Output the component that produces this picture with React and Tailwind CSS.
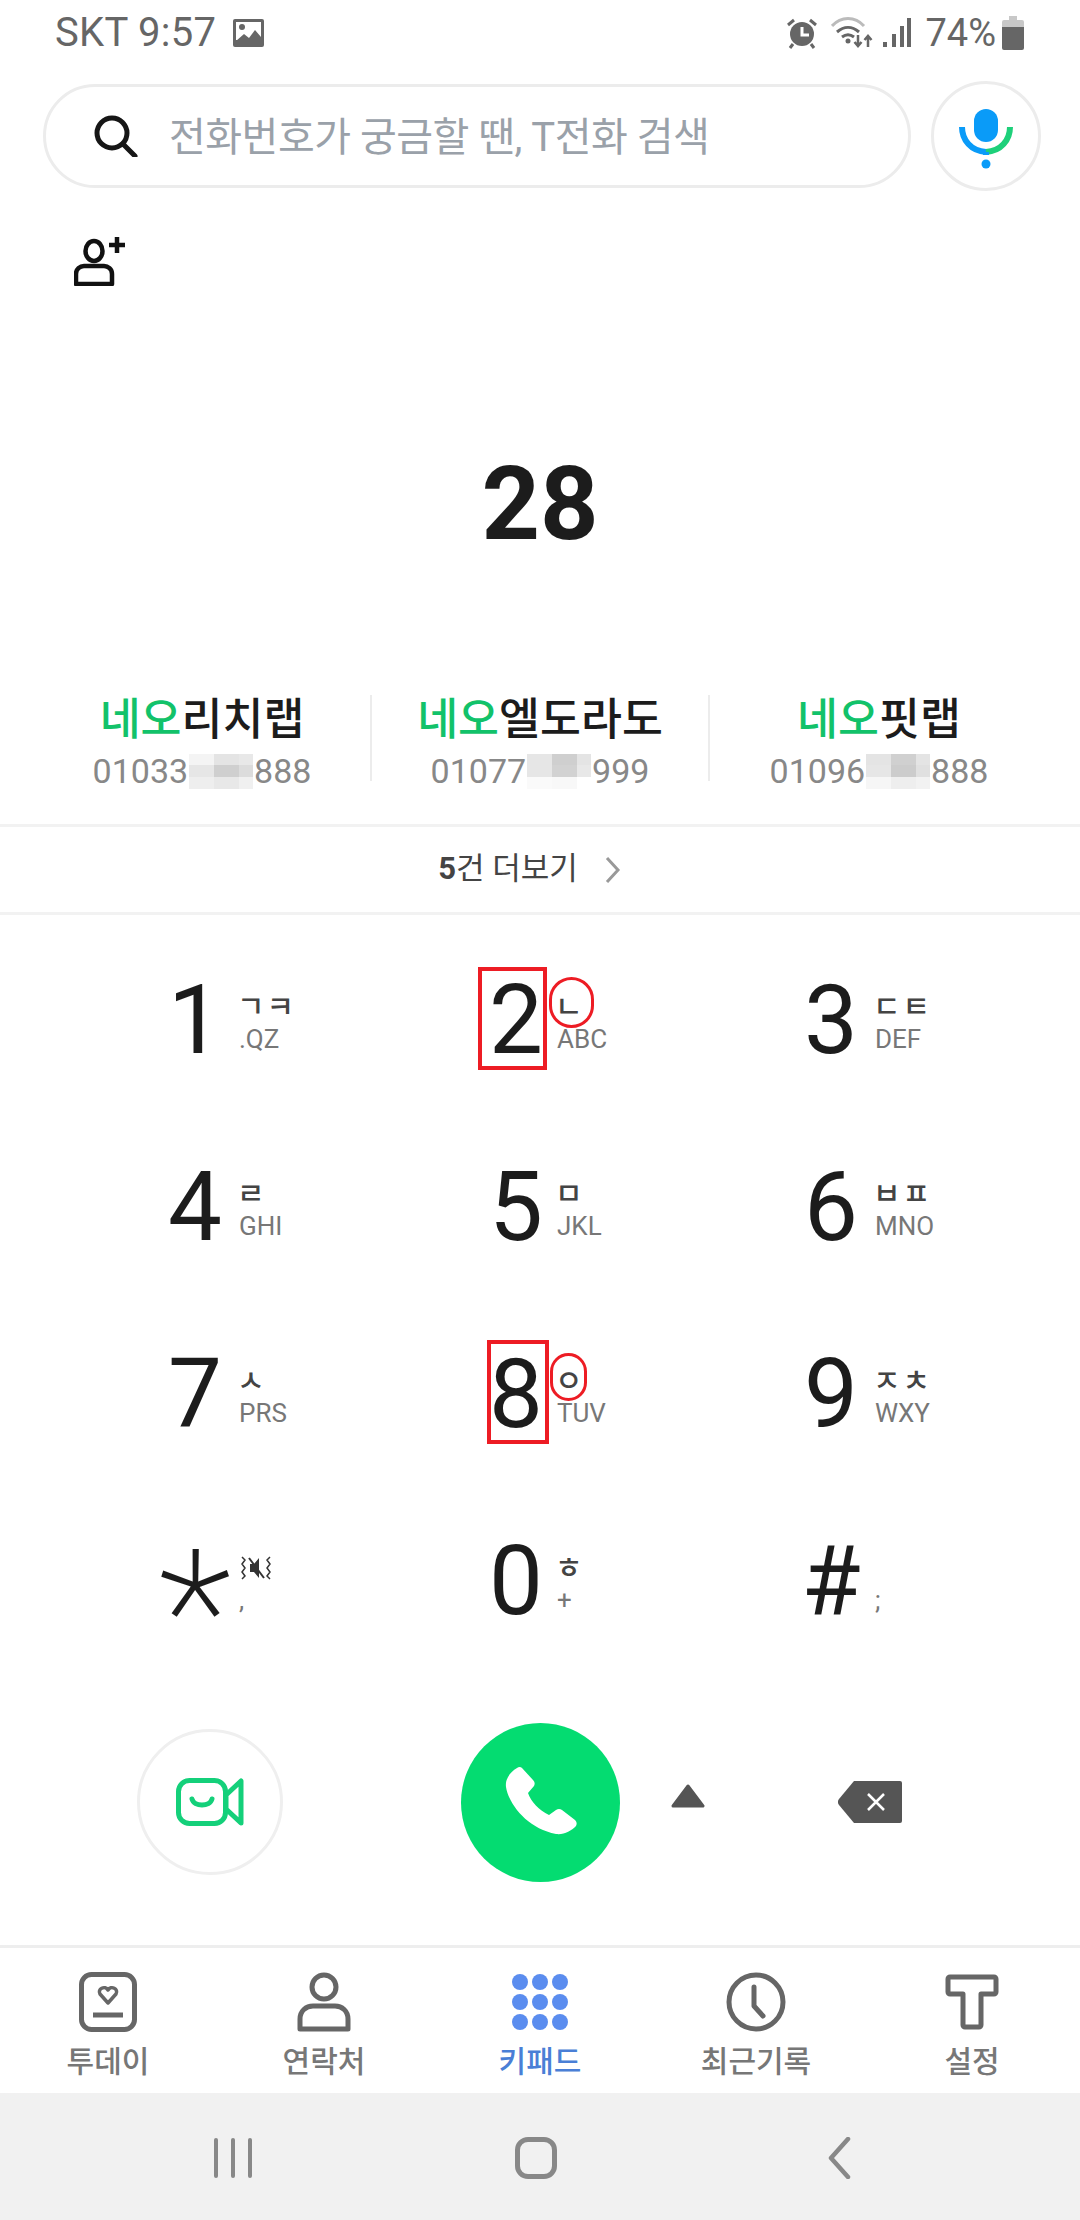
import React from "react";

const keys = [
  { digit: "1", jamo: "ㄱㅋ", letters: ".QZ" },
  { digit: "2", jamo: "ㄴ", letters: "ABC", box: "left-[-5px] top-[41px] h-[103px] w-[69px]", ring: "left-[66px] top-[51px] h-[51px] w-[45px]" },
  { digit: "3", jamo: "ㄷㅌ", letters: "DEF" },
  { digit: "4", jamo: "ㄹ", letters: "GHI" },
  { digit: "5", jamo: "ㅁ", letters: "JKL" },
  { digit: "6", jamo: "ㅂㅍ", letters: "MNO" },
  { digit: "7", jamo: "ㅅ", letters: "PRS" },
  { digit: "8", jamo: "ㅇ", letters: "TUV", box: "left-[4px] top-[40px] h-[104px] w-[62px]", ring: "left-[67px] top-[53px] h-[48px] w-[37px]" },
  { digit: "9", jamo: "ㅈㅊ", letters: "WXY" },
  { digit: "*", letters: "," },
  { digit: "0", jamo: "ㅎ", letters: "+" },
  { digit: "#", letters: ";" },
];

const contacts = [
  {
    name: "리치랩",
    head: "01033",
    tail: "888",
    cells: ["bg-[#f4f4f4]", "bg-[#e4e4e4]", "bg-[#e8e8e8]", "bg-[#e6e6e6]", "bg-[#cfcfcf]", "bg-[#dcdcdc]", "bg-[#eeeeee]", "bg-[#e8e8e8]", "bg-[#f0f0f0]"],
  },
  {
    name: "엘도라도",
    head: "01077",
    tail: "999",
    cells: ["bg-[#e6e6e6]", "bg-[#cfcfcf]", "bg-[#e4e4e4]", "bg-[#e6e6e6]", "bg-[#d2d2d2]", "bg-[#e8e8e8]", "bg-[#fafafa]", "bg-[#f8f8f8]", "bg-white"],
  },
  {
    name: "핏랩",
    head: "01096",
    tail: "888",
    cells: ["bg-[#e4e4e4]", "bg-[#d0d0d0]", "bg-[#e4e4e4]", "bg-[#e6e6e6]", "bg-[#cccccc]", "bg-[#e0e0e0]", "bg-[#f6f6f6]", "bg-[#eeeeee]", "bg-[#f2f2f2]"],
  },
];

function StatusIcons() {
  return (
    <div className="flex items-center">
      <svg width="32" height="32" viewBox="0 0 32 32" className="mr-[13px]">
        <circle cx="16" cy="17" r="12" fill="#666" />
        <path d="M16 10v8h7" fill="none" stroke="#fff" strokeWidth="3" />
        <path d="M2 8l6-5M30 8l-6-5M7 27l-3 4M25 27l3 4" stroke="#666" strokeWidth="3" />
      </svg>
      <svg width="42" height="32" viewBox="0 0 42 32" className="mr-[10px]">
        <path d="M1 9C10-1 24-1 33 9" fill="none" stroke="#bbb" strokeWidth="3" />
        <path d="M6 15c7-6 15-6 22 0" fill="none" stroke="#666" strokeWidth="3" />
        <path d="M11 20c4-3 8-3 12 0" fill="none" stroke="#666" strokeWidth="3" />
        <circle cx="17" cy="24" r="2.5" fill="#666" />
        <path d="M27 18v11m-3.500-4l3.500 4 3.500-4M37 30V19m-3.500 4l3.500-4 3.500 4" fill="none" stroke="#666" strokeWidth="2.500" />
      </svg>
      <svg width="28" height="30" viewBox="0 0 28 30" className="mr-[14px]">
        <path d="M2 24v5M11 16v13M19 8v21M26 0v29" stroke="#666" strokeWidth="4" />
      </svg>
      <span className="text-[38px] leading-none text-[#666]">74%</span>
      <svg width="22" height="34" viewBox="0 0 22 34" className="ml-[6px]">
        <path d="M7 0h8v4h5a2 2 0 0 1 2 2v6H0V6a2 2 0 0 1 2-2h5z" fill="#c8c8c8" />
        <path d="M0 11h22v21a2 2 0 0 1-2 2H2a2 2 0 0 1-2-2z" fill="#666" />
      </svg>
    </div>
  );
}

function SearchBar() {
  return (
    <div className="flex h-[110px] items-center pl-[43px]">
      <div className="flex h-[104px] w-[868px] items-center rounded-full border-[3px] border-[#ececec] pl-[48px]">
        <svg width="44" height="42" viewBox="0 0 44 42">
          <circle cx="18" cy="18" r="15" fill="none" stroke="#161616" strokeWidth="5" />
          <path d="M29 29l12 12" stroke="#161616" strokeWidth="5" strokeLinecap="round" />
        </svg>
        <span className="mt-[3px] ml-[31px] text-[40px] tracking-[-0.5px] text-[#9aa1a9]">전화번호가 궁금할 땐, T전화 검색</span>
      </div>
      <div className="ml-[20px] flex h-[110px] w-[110px] items-center justify-center rounded-full border-[3px] border-[#ececec] pt-[8px]">
        <svg width="54" height="62" viewBox="0 0 54 62">
          <rect x="15" y="0" width="24" height="33" rx="12" fill="#0a9bf8" />
          <path d="M3 18c0 13 9 24 24 25" fill="none" stroke="#0a9bf8" strokeWidth="6" />
          <path d="M51 18c0 13-9 24-24 25" fill="none" stroke="#1ed07a" strokeWidth="6" />
          <path d="M27 43v3" stroke="#0a9bf8" strokeWidth="6" />
          <circle cx="27" cy="55" r="4.500" fill="#0a9bf8" />
        </svg>
      </div>
    </div>
  );
}

function Patch({ cells }) {
  return (
    <span className="mx-[1px] inline-grid h-[35px] w-[64px] grid-cols-[25px_25px_14px] grid-rows-3">
      {cells.map((c, i) => (
        <span key={i} className={c} />
      ))}
    </span>
  );
}

function Contacts() {
  return (
    <div className="grid h-[132px] grid-cols-3 border-b-[3px] border-[#f2f2f2] pr-[32px] pl-[34px]">
      {contacts.map((c, i) => (
        <div key={c.head} className={`flex h-[86px] flex-col items-center ${i < 2 ? "border-r-2 border-[#ececec]" : ""}`}>
          <div className="h-[58px] shrink-0 text-[44.5px] leading-[50px] font-medium text-[#1c1c1c]">
            <span className="text-[#12c26a]">네오</span>
            {c.name}
          </div>
          <div className="flex shrink-0 items-center text-[34px] leading-[36px] text-[#888]">
            {c.head}
            <Patch cells={c.cells} />
            {c.tail}
          </div>
        </div>
      ))}
    </div>
  );
}

function Key({ k, middle }) {
  return (
    <div className="relative flex h-[187px] items-center gap-[14px]">
      <div className={`flex h-[100px] w-[60px] items-center justify-center ${middle ? "translate-x-[3px]" : ""}`}>
        {k.digit === "*" ? (
          <span className="translate-y-[32px] text-[172px] leading-none font-extralight text-[#1c1c1c]">*</span>
        ) : (
          <span className="text-[96px] leading-none font-normal text-[#1c1c1c]">{k.digit}</span>
        )}
      </div>
      <div className="flex w-[70px] flex-col pt-[5px]">
        <div className="flex h-[32px] items-center">
          {k.digit === "*" ? (
            <svg width="34" height="26" viewBox="0 0 34 26">
              <path d="M11 9h4l5-6v20l-5-6h-4z" fill="#333" />
              <path d="M10 3l15 20" stroke="#333" strokeWidth="2" />
              <path d="M3 2l3 3-3 4 3 4-3 4 3 4-3 3M31 2l-3 3 3 4-3 4 3 4-3 4 3 3" fill="none" stroke="#333" strokeWidth="1.500" />
            </svg>
          ) : (
            <span className="-ml-[2px] text-[30px] leading-none font-medium tracking-[2px] whitespace-pre text-[#444]">{k.jamo}</span>
          )}
        </div>
        <span className="mt-[2px] text-[26px] leading-[28px] text-[#777]">{k.letters}</span>
      </div>
      {k.box && <div className={`absolute border-4 border-[#ed1c24] ${k.box}`} />}
      {k.ring && <div className={`absolute rounded-full border-[3px] border-[#ed1c24] ${k.ring}`} />}
    </div>
  );
}

function CallRow() {
  return (
    <div className="mt-[49px] flex h-[158px] items-center pl-[137px]">
      <div className="flex h-[146px] w-[146px] items-center justify-center rounded-full border-[3px] border-[#efefef]">
        <svg width="68" height="48" viewBox="0 0 68 48">
          <rect x="2.500" y="2.500" width="47" height="43" rx="11" fill="none" stroke="#14d07a" strokeWidth="5" />
          <path d="M50 17l15-14v42L50 31z" fill="none" stroke="#14d07a" strokeWidth="5" strokeLinejoin="round" />
          <path d="M16 21c2 8 18 8 20 0" fill="none" stroke="#14d07a" strokeWidth="5" strokeLinecap="round" />
        </svg>
      </div>
      <div className="ml-[178px] flex h-[159px] w-[159px] items-center justify-center rounded-full bg-[#04dc71]">
        <svg width="72" height="70" viewBox="-1 0 72 70">
          <path fill="#fff" d="M11 1c2-1.500 4-1 5 0L27 13c2 2 2 4 1 6L22 26C25 35 33 43 43 48L50 43c2-1.500 4-1.500 6 0L69 53c2 2 2 4 1 6C65 64 58 68 50 67C22 62 3 38 0 20C-1 12 4 5 11 1Z" />
        </svg>
      </div>
      <svg width="34" height="24" viewBox="0 0 34 24" className="mb-[12px] ml-[51px]">
        <path d="M17 2L32 22H2z" fill="#555" stroke="#555" strokeWidth="3" strokeLinejoin="round" />
      </svg>
      <svg width="64" height="42" viewBox="0 0 64 42" className="ml-[133px]">
        <path d="M16 0h46a2 2 0 0 1 2 2v38a2 2 0 0 1-2 2H16L1 24a5 5 0 0 1 0-6z" fill="#555" />
        <path d="M30 13l16 16M46 13L30 29" stroke="#fff" strokeWidth="2.500" />
      </svg>
    </div>
  );
}

function TabIcon({ name }) {
  const g = { fill: "none", stroke: "#666", strokeWidth: 5 };
  if (name === "today") {
    return (
      <svg width="58" height="60" viewBox="0 0 58 60">
        <rect x="2.500" y="2.500" width="53" height="55" rx="10" {...g} />
        <path d="M29 31l-8-9c-3-5 5-9 8-4 3-5 11-1 8 4z" fill="none" stroke="#666" strokeWidth="3.500" strokeLinejoin="round" />
        <path d="M14 43h30" {...g} />
      </svg>
    );
  }
  if (name === "contact") {
    return (
      <svg width="54" height="60" viewBox="0 0 54 60">
        <circle cx="27" cy="15" r="12" {...g} />
        <path d="M3 57V47c0-8 6-13 13-13h22c7 0 13 5 13 13v10z" {...g} strokeLinejoin="round" />
      </svg>
    );
  }
  if (name === "keypad") {
    return (
      <svg width="58" height="58" viewBox="0 0 58 58" fill="#5b8def">
        {[9, 29, 49].map((cy) =>
          [9, 29, 49].map((cx) => <circle key={`${cx}-${cy}`} cx={cx} cy={cy} r="8" />)
        )}
      </svg>
    );
  }
  if (name === "recent") {
    return (
      <svg width="60" height="60" viewBox="0 0 60 60">
        <circle cx="30" cy="30" r="27" {...g} />
        <path d="M28 15v19l9 10" {...g} strokeLinecap="round" strokeLinejoin="round" />
      </svg>
    );
  }
  return (
    <svg width="54" height="56" viewBox="0 0 54 56">
      <path d="M3 5a2 2 0 0 1 2-2h44a2 2 0 0 1 2 2v13a2 2 0 0 1-2 2H36v31a2 2 0 0 1-2 2h-14a2 2 0 0 1-2-2V20H5a2 2 0 0 1-2-2z" {...g} strokeLinejoin="round" />
    </svg>
  );
}

const tabs = [
  { id: "today", label: "투데이" },
  { id: "contact", label: "연락처" },
  { id: "keypad", label: "키패드", active: true },
  { id: "recent", label: "최근기록" },
  { id: "settings", label: "설정" },
];

export default function App() {
  return (
    <div className="flex h-[2220px] w-[1080px] flex-col overflow-hidden bg-white font-['Roboto','Noto_Sans_CJK_KR',sans-serif]">
      {/* status bar */}
      <div className="flex h-[66px] items-center justify-between pr-[56px] pl-[55px]">
        <div className="flex items-center">
          <span className="text-[40px] leading-none tracking-[0.3px] text-[#666]">SKT 9:57</span>
          <svg width="31" height="28" viewBox="0 0 31 28" className="ml-[17px]">
            <rect width="31" height="28" rx="2" fill="#666" />
            <rect x="3" y="3" width="25" height="18" fill="#fff" />
            <circle cx="9" cy="8" r="3" fill="#666" />
            <path d="M3 22l8-7 5 4 6-8 6 7v6H3z" fill="#666" />
          </svg>
        </div>
        <StatusIcons />
      </div>

      <div className="pt-[15px]">
        <SearchBar />
      </div>

      <div className="pt-[45px] pl-[74px]">
        <svg width="54" height="50" viewBox="0 0 54 50" className="block">
          <ellipse cx="20" cy="15" rx="8.500" ry="10" fill="none" stroke="#111" strokeWidth="4.500" />
          <path d="M2 48V38c0-5 4-8 8-8h20c4 0 8 3 8 8v10z" fill="none" stroke="#111" strokeWidth="4.500" strokeLinejoin="round" />
          <path d="M43 1v16M35 9h16" stroke="#111" strokeWidth="4.500" />
        </svg>
      </div>

      <div className="flex h-[409px] items-center justify-center pt-[28px] text-[102px] font-bold text-[#1c1c1c]">28</div>

      <Contacts />

      <div className="flex h-[88px] items-center justify-center border-b-[3px] border-[#f2f2f2] pr-[20px] text-[31px] text-[#444]">
        <span>
          <span className="font-bold">5</span>건 더보기
        </span>
        <svg width="18" height="28" viewBox="0 0 18 28" className="ml-[26px]">
          <path d="M3 2l11 12L3 26" fill="none" stroke="#999" strokeWidth="3" />
        </svg>
      </div>

      {/* keypad */}
      <div className="grid grid-cols-[repeat(3,318px)] pt-[11px] pl-[165px]">
        {keys.map((k, i) => (
          <Key key={k.digit} k={k} middle={i % 3 === 1} />
        ))}
      </div>

      <CallRow />

      {/* bottom tabs */}
      <div className="mt-[64px] grid h-[148px] grid-cols-5 border-t-[3px] border-[#eeeeee] pt-[24px]">
        {tabs.map((t) => (
          <div key={t.id} className="flex flex-col items-center">
            <div className="flex h-[60px] items-center">
              <TabIcon name={t.id} />
            </div>
            <span className={`mt-[12px] text-[30px] leading-[36px] font-medium ${t.active ? "text-[#4a7fd6]" : "text-[#777]"}`}>{t.label}</span>
          </div>
        ))}
      </div>

      {/* android nav */}
      <div className="grid flex-1 grid-cols-[repeat(3,303px)] items-center bg-[#f1f1f1] pt-[2px] pl-[81px]">
        <div className="flex justify-center gap-[13px]">
          <div className="h-[40px] w-[4px] rounded-full bg-[#888]" />
          <div className="h-[40px] w-[4px] rounded-full bg-[#888]" />
          <div className="h-[40px] w-[4px] rounded-full bg-[#888]" />
        </div>
        <div className="flex justify-center">
          <div className="h-[42px] w-[42px] rounded-[13px] border-[5px] border-[#888]" />
        </div>
        <div className="flex justify-center">
          <svg width="24" height="42" viewBox="0 0 24 42">
            <path d="M21 2L4 21l17 19" fill="none" stroke="#888" strokeWidth="4.500" strokeLinecap="round" strokeLinejoin="round" />
          </svg>
        </div>
      </div>
    </div>
  );
}
